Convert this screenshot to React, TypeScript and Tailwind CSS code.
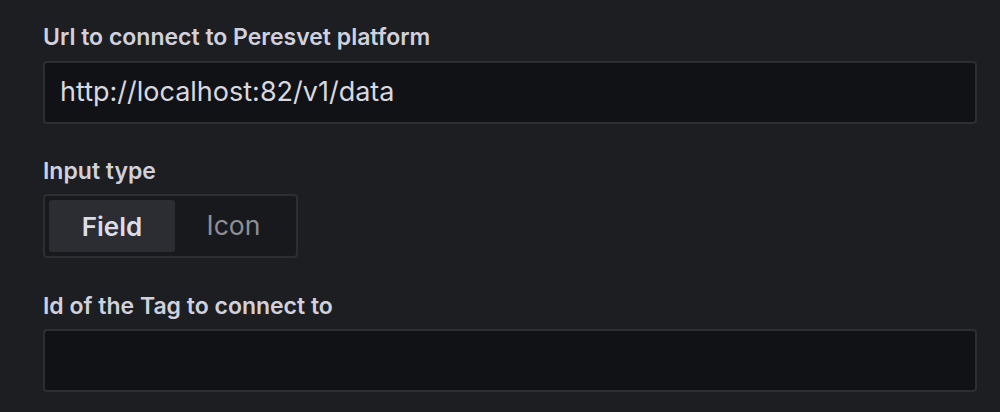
export default function App() {
  return (
    <div className="h-[412px] w-[1000px] bg-[#1d1e22] pl-[43px] pr-[23px] pt-[23px] font-['Inter',sans-serif] text-[#d0d1dc]">
      <label className="mb-[10px] block text-[23px] font-semibold leading-[28px]">
        Url to connect to Peresvet platform
      </label>
      <div className="flex h-[63px] items-center rounded-[4px] border-2 border-[#2d2e33] bg-[#111216] px-[15px] text-[27px] text-[#d8d9e0]">
        http://localhost:82/v1/data
      </div>

      <label className="mb-[9px] mt-[33px] block text-[23px] font-semibold leading-[28px]">
        Input type
      </label>
      <div className="flex h-[64px] w-[255px] items-stretch rounded-[4px] border-2 border-[#2d2e33] bg-[#18191d] p-[4px]">
        <button className="w-[126px] rounded-[3px] bg-[#2c2d33] text-[26px] font-semibold text-[#dcdde6]">
          Field
        </button>
        <button className="flex-1 text-[26.5px] text-[#8e8f97]">Icon</button>
      </div>

      <label className="mb-[9px] mt-[34px] block text-[23px] font-semibold leading-[28px]">
        Id of the Tag to connect to
      </label>
      <div className="h-[63px] rounded-[4px] border-2 border-[#2d2e33] bg-[#111216]" />
    </div>
  );
}
